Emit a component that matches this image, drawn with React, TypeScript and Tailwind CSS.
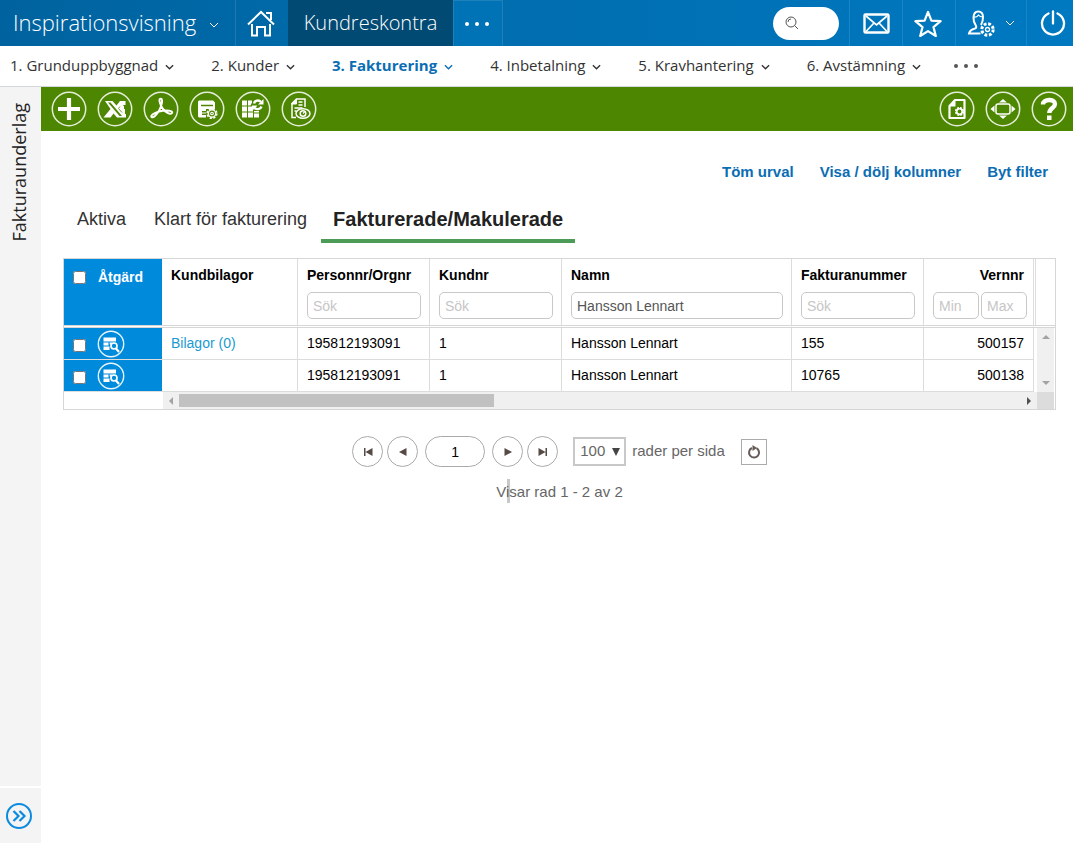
import type { ReactNode } from 'react'

interface InvoiceRow {
  attachments: string | null
  personNr: string
  customerNr: string
  name: string
  invoiceNr: string
  voucherNr: string
}

const rows: InvoiceRow[] = [
  {
    attachments: 'Bilagor (0)',
    personNr: '195812193091',
    customerNr: '1',
    name: 'Hansson Lennart',
    invoiceNr: '155',
    voucherNr: '500157',
  },
  {
    attachments: null,
    personNr: '195812193091',
    customerNr: '1',
    name: 'Hansson Lennart',
    invoiceNr: '10765',
    voucherNr: '500138',
  },
]

const steps = [
  { label: '1. Grunduppbyggnad' },
  { label: '2. Kunder' },
  { label: '3. Fakturering', active: true },
  { label: '4. Inbetalning' },
  { label: '5. Kravhantering' },
  { label: '6. Avstämning' },
]

function Chevron({ className }: { className: string }) {
  return (
    <svg viewBox="0 0 10 6" className={className} fill="none" stroke="currentColor">
      <path d="M1 1l4 4 4-4" />
    </svg>
  )
}

function HomeIcon() {
  return (
    <svg viewBox="0 0 28 27" className="h-[27px] w-7" fill="none" stroke="currentColor" strokeWidth="2">
      <path d="M1 14.5L14 2l13 12.5" />
      <path d="M19 3h5v7" />
      <path d="M5 14v11.500h5v-8.500h8v8.500h5V14" />
    </svg>
  )
}

function MailIcon() {
  return (
    <svg viewBox="0 0 27 21" className="h-[21px] w-[27px]" fill="none" stroke="currentColor" strokeWidth="2.400">
      <rect x="1.500" y="1.500" width="24" height="18" rx="1" />
      <path d="M3 3l10.500 9L24 3M3 18.500l7.500-8M24 18.500l-7.500-8" strokeWidth="1.700" />
    </svg>
  )
}

function StarIcon() {
  return (
    <svg viewBox="0 0 28 27" className="h-[27px] w-7" fill="none" stroke="currentColor" strokeWidth="2.200" strokeLinejoin="round">
      <path d="M14 2l3.400 8.600 9.200.6-7.100 5.900 2.300 8.900L14 21.100 6.200 26l2.300-8.900-7.100-5.900 9.200-.6z" />
    </svg>
  )
}

function UserIcon() {
  return (
    <svg viewBox="0 0 28 27" className="h-[27px] w-7" fill="none" stroke="currentColor" strokeWidth="2">
      <path d="M13.500 23.500H2c.5-3 2.500-4 6-5 1.500-.5 1.500-1.700.7-3.200C6.800 12.500 6.300 10 6.500 7c.3-3.500 2-5.500 4.700-5.500S16 3.500 16 7c.1 3-.5 5.500-2 8" />
      <path d="M7 7c3 .3 3.700-1 4.500-2 1 1.500 2.500 2 4.500 2" strokeWidth="1.200" />
      <circle cx="20.500" cy="19.500" r="5.700" strokeWidth="3" strokeDasharray="2.800 1.677" />
      <circle cx="20.500" cy="19.500" r="2" strokeWidth="1.300" />
    </svg>
  )
}

function PowerIcon() {
  return (
    <svg viewBox="0 0 26 26" className="h-[26px] w-[26px]" fill="none" stroke="currentColor" strokeWidth="2.300" strokeLinecap="round">
      <path d="M8.500 3.500a11 11 0 1 0 9 0" />
      <path d="M13 1.500v12" />
    </svg>
  )
}

function PlusIcon() {
  return <path d="M18 7v22M7 18h22" strokeWidth="4.200" />
}

function ExcelIcon() {
  return (
    <g stroke="none" fill="currentColor">
      <path d="M8 10h7.500l4 4.500 3.500-4.500h5.500V14h-3l1.500 1v3h1v5h1v3.500h-9l-3.500-4-3 4H6.500L13.500 18z" />
      <path d="M11 11.500h2.500L25 25h-2.500z" fill="#4d8600" />
      <path d="M23 15.500l-1.500 2 3.500 4" fill="none" stroke="#4d8600" strokeWidth=".8" />
    </g>
  )
}

function PdfIcon() {
  return (
    <path
      d="M17 8c2-1 2.500 1.500 1.600 5-1 4.500-4 9.500-7 12.300-1.700 1.600-3.800 1.300-3.200-.5.7-2 6-4.300 11.500-5 4.500-.6 9.300-.2 9.300 1.700 0 1.600-2.700 1.500-4.700.4-3.700-2-6.300-6-7.500-10C16.400 10 16 8.500 17 8z"
      strokeWidth="2"
    />
  )
}

function SaveGearIcon() {
  return (
    <>
      <path d="M10 9.500h14l2 2V18h-9v2h-4v4h4v2.500h-7l-1-1v-15z" fill="currentColor" stroke="none" />
      <path d="M12 14.500h12" stroke="#4d8600" strokeWidth="1.500" />
      <path d="M13 22h4" stroke="currentColor" strokeWidth="1" />
      <circle cx="23" cy="22.500" r="4.800" strokeWidth="1.600" strokeDasharray="2.200 1.570" />
      <circle cx="23" cy="22.500" r="3.700" fill="#4d8600" strokeWidth="1.400" />
      <circle cx="23" cy="22.500" r="1.300" strokeWidth="1.100" />
    </>
  )
}

function GridRefreshIcon() {
  return (
    <>
      <path
        d="M7 9.500h5v5H7zM13 9.500h4v2l-1.500 3H13zM7 15.500h5v5H7zM13 15.500h5v5h-5zM19 20h5v1.500h-5zM7 21.500h5v5H7zM13 21.500h5v5h-5zM19 22.500h5v4h-5z"
        fill="currentColor"
        stroke="none"
      />
      <path d="M19 12.500c.7-3.200 4.800-4 7-1.500M26.500 15.500c-1 3-4.800 3.500-7 1.300" strokeWidth="2.400" />
      <path d="M28.500 8v5.500H23zM17 20v-5.500h5.500z" fill="currentColor" stroke="none" />
    </>
  )
}

function DocumentEyeIcon() {
  return (
    <>
      <path d="M15 26.500h-4V12.500L15.500 8H24v8" strokeWidth="1.500" />
      <path d="M10.500 13L15.500 8v5z" fill="currentColor" />
      <path d="M17.500 11h4M17.500 14h4M13.500 17h8M13.500 20h2" strokeWidth="1.300" />
      <ellipse cx="22" cy="22.500" rx="7" ry="4.700" strokeWidth="1.500" />
      <circle cx="22" cy="22.500" r="2.800" strokeWidth="1.500" />
      <path d="M22 22.500l1.500-1.500" strokeWidth="1.200" />
    </>
  )
}

function DocumentGearIcon() {
  return (
    <>
      <path d="M10.500 27V15l5.500-6h9.500v18z" strokeWidth="2.200" strokeLinejoin="round" />
      <path d="M10 15.500L16.500 8.500v7z" fill="currentColor" stroke="none" />
      <circle cx="20.500" cy="20.500" r="3.700" strokeWidth="1.800" strokeDasharray="2 .905" />
      <circle cx="20.500" cy="20.500" r="2.700" strokeWidth="1.500" />
    </>
  )
}

function ExpandIcon() {
  return (
    <>
      <rect x="11" y="13" width="14" height="10" rx="2" strokeWidth="1.500" />
      <path d="M14 11.500L18 8l4 3.500zM14 24.500L18 28l4-3.500zM9.500 14.500L5.500 18l4 3.500zM26.500 14.500l4 3.500-4 3.500z" fill="currentColor" stroke="none" />
    </>
  )
}

function HelpIcon() {
  return (
    <>
      <path d="M12 13.500c0-6 12-6 12-.5 0 4-5.700 4-5.700 9" strokeWidth="4.400" />
      <path d="M16 24.500h4.500V29H16z" fill="currentColor" stroke="none" />
    </>
  )
}

function ToolButton({ label, children }: { label: string; children: ReactNode }) {
  return (
    <button type="button" aria-label={label} className="h-9 w-9 text-white">
      <svg viewBox="0 0 36 36" className="h-9 w-9" fill="none" stroke="currentColor">
        <circle cx="18" cy="18" r="16.700" strokeWidth="1.500" strokeOpacity=".85" />
        {children}
      </svg>
    </button>
  )
}

function HeaderButton({ label, className, children }: { label: string; className: string; children: ReactNode }) {
  return (
    <button
      type="button"
      aria-label={label}
      className={`flex shrink-0 items-center justify-center border-l border-[#1a86c8] ${className}`}
    >
      {children}
    </button>
  )
}

function TopBar() {
  return (
    <header className="flex h-[46px] items-stretch bg-linear-to-r from-[#00639f] to-[#0079c1] font-['Open_Sans',sans-serif] text-white">
      <button type="button" className="flex w-[235px] shrink-0 items-center pb-[2px] pl-[13px] text-[22px] font-light">
        Inspirationsvisning
        <Chevron className="mt-[6px] ml-[13px] h-[6px] w-[10px]" />
      </button>
      <button type="button" aria-label="Hem" className="flex w-[53px] shrink-0 items-center justify-center border-l border-[#1f78b0] pr-[2px]">
        <HomeIcon />
      </button>
      <button type="button" className="w-[165px] shrink-0 bg-[#004a73] text-xl font-light">
        Kundreskontra
      </button>
      <button
        type="button"
        aria-label="Fler moduler"
        className="flex w-[50px] shrink-0 items-center justify-center gap-[6px] border-x border-t border-[#1f80bb] bg-[#0073b7] pr-[3px]"
      >
        <span className="h-1 w-1 rounded-full bg-white" />
        <span className="h-1 w-1 rounded-full bg-white" />
        <span className="h-1 w-1 rounded-full bg-white" />
      </button>

      <div className="ml-auto flex items-stretch">
        <label className="mr-[10px] flex h-[33px] w-[66px] items-center self-center rounded-full bg-white pl-3 text-[#555]">
          <svg viewBox="0 0 14 14" className="h-[14px] w-[14px] shrink-0" fill="none" stroke="currentColor">
            <circle cx="6" cy="6" r="5" />
            <path d="M3 6a3 3 0 0 1 3-3M9.500 9.500l3.500 3.500" />
          </svg>
          <input type="text" aria-label="Sök" className="w-9 bg-transparent text-sm outline-none" />
        </label>
        <HeaderButton label="Meddelanden" className="w-[53px]">
          <MailIcon />
        </HeaderButton>
        <HeaderButton label="Favoriter" className="w-[53px] pr-[2px]">
          <StarIcon />
        </HeaderButton>
        <HeaderButton label="Användare" className="w-[71px] gap-[10px]">
          <UserIcon />
          <Chevron className="h-[6px] w-[10px]" />
        </HeaderButton>
        <HeaderButton label="Logga ut" className="w-[47px] pl-[6px]">
          <PowerIcon />
        </HeaderButton>
      </div>
    </header>
  )
}

function StepNav() {
  return (
    <nav className="flex h-[41px] items-center gap-[37px] border-b border-[#d4d8dc] pb-[2px] pl-[10px] font-['Open_Sans',sans-serif] text-[15px] whitespace-nowrap text-[#333]">
      {steps.map((step) => (
        <a
          key={step.label}
          href="#"
          className={step.active ? 'flex items-center gap-[7px] font-bold text-[#0b6db3]' : 'flex items-center gap-[7px]'}
        >
          {step.label}
          <Chevron className="mt-[3px] h-[6px] w-[9px] stroke-[1.5]" />
        </a>
      ))}
      <button type="button" aria-label="Fler steg" className="-ml-1 flex gap-[6px] pt-[2px]">
        <span className="h-1 w-1 rounded-full bg-[#555]" />
        <span className="h-1 w-1 rounded-full bg-[#555]" />
        <span className="h-1 w-1 rounded-full bg-[#555]" />
      </button>
    </nav>
  )
}

function Sidebar() {
  return (
    <aside className="flex w-[41px] shrink-0 flex-col bg-[#f4f4f4]">
      <h1 className="mt-[16px] ml-[7px] rotate-180 self-start font-['Open_Sans',sans-serif] text-lg leading-6 font-medium text-[#222] [writing-mode:vertical-rl]">
        Fakturaunderlag
      </h1>
      <div className="mt-auto h-[57px] border-t-2 border-white pt-[14px] pl-[5px]">
        <button type="button" aria-label="Visa meny" className="block text-[#0a8ae0]">
          <svg viewBox="0 0 28 28" className="h-7 w-7" fill="none" stroke="currentColor" strokeWidth="2">
            <circle cx="14" cy="14" r="12" />
            <path d="M8.500 9l5 5-5 5M14.500 9l5 5-5 5" strokeWidth="2.200" />
          </svg>
        </button>
      </div>
    </aside>
  )
}

function Toolbar() {
  return (
    <div className="flex h-11 items-center justify-between bg-[#4d8600] pr-[6px] pl-[10px]">
      <div className="flex gap-[10px]">
        <ToolButton label="Ny"><PlusIcon /></ToolButton>
        <ToolButton label="Exportera till Excel"><ExcelIcon /></ToolButton>
        <ToolButton label="Exportera till PDF"><PdfIcon /></ToolButton>
        <ToolButton label="Spara inställningar"><SaveGearIcon /></ToolButton>
        <ToolButton label="Uppdatera"><GridRefreshIcon /></ToolButton>
        <ToolButton label="Förhandsgranska"><DocumentEyeIcon /></ToolButton>
      </div>
      <div className="flex gap-[10px]">
        <ToolButton label="Sidinställningar"><DocumentGearIcon /></ToolButton>
        <ToolButton label="Helskärm"><ExpandIcon /></ToolButton>
        <ToolButton label="Hjälp"><HelpIcon /></ToolButton>
      </div>
    </div>
  )
}

function FilterInput({ label, placeholder, value }: { label: string; placeholder?: string; value?: string }) {
  return (
    <input
      type="text"
      aria-label={label}
      placeholder={placeholder}
      defaultValue={value}
      className="block h-[27px] w-full min-w-0 rounded-[5px] border border-[#c8c8c8] px-[5px] font-normal text-[#555] placeholder:text-[#c6c6c6]"
    />
  )
}

function ColumnHeader({ label, placeholder = 'Sök', value }: { label: string; placeholder?: string; value?: string }) {
  return (
    <th className="border-r border-b-[3px] border-r-[#dcdcdc] border-b-[#d6d6d6] px-2 pt-2 pl-[9px] text-left align-top [border-bottom-style:double]">
      <div className="mb-[9px] leading-4">{label}</div>
      <FilterInput label={label} placeholder={placeholder} value={value} />
    </th>
  )
}

function InvoiceTable() {
  const cell = 'border-r border-b border-[#dcdcdc] px-[9px] pb-[2px]'

  return (
    <div className="border border-[#d6d6d6]">
      <table className="w-full table-fixed border-separate border-spacing-0 text-sm text-black">
        <colgroup>
          <col className="w-[98px]" />
          <col className="w-[136px]" />
          <col className="w-[132px]" />
          <col className="w-[132px]" />
          <col />
          <col className="w-[132px]" />
          <col className="w-[110px]" />
          <col className="w-[21px]" />
        </colgroup>
        <thead>
          <tr className="h-[69px]">
            <th className="border-b-[3px] border-[#d6d6d6] bg-[#008adb] bg-clip-padding pt-[9px] pl-[9px] align-top text-white [border-bottom-style:double]">
              <div className="flex items-center gap-3 leading-[18px]">
                <input type="checkbox" aria-label="Markera alla" className="m-0 h-[13px] w-[13px]" />
                Åtgärd
              </div>
            </th>
            <th className="border-r border-b-[3px] border-r-[#dcdcdc] border-b-[#d6d6d6] pt-2 pl-[9px] text-left align-top leading-4 [border-bottom-style:double]">
              Kundbilagor
            </th>
            <ColumnHeader label="Personnr/Orgnr" />
            <ColumnHeader label="Kundnr" />
            <ColumnHeader label="Namn" value="Hansson Lennart" />
            <ColumnHeader label="Fakturanummer" />
            <th className="border-r border-b-[3px] border-r-[#dcdcdc] border-b-[#d6d6d6] pt-2 pr-[6px] pl-[9px] align-top [border-bottom-style:double]">
              <div className="mb-[9px] pr-[3px] text-right leading-4">Vernnr</div>
              <div className="flex gap-[2px]">
                <FilterInput label="Vernnr min" placeholder="Min" />
                <FilterInput label="Vernnr max" placeholder="Max" />
              </div>
            </th>
            <td className="border-b-[3px] border-[#d6d6d6] p-0 pl-[1px] [border-bottom-style:double]">
              <div className="h-[66px] border-l border-[#dcdcdc]" />
            </td>
          </tr>
        </thead>
        <tbody>
          {rows.map((row, index) => (
            <tr key={row.invoiceNr} className="h-8">
              <td className="border-b border-[#dcdcdc] bg-[#008adb] bg-clip-padding p-0 pl-[9px]">
                <div className="flex items-center gap-[11px]">
                  <input type="checkbox" aria-label={`Markera faktura ${row.invoiceNr}`} className="mx-0 mt-[3px] mb-0 h-[13px] w-[13px]" />
                  <button type="button" aria-label="Visa detaljer" className="text-white">
                    <svg viewBox="0 0 28 28" className="block h-7 w-7" fill="none" stroke="currentColor">
                      <circle cx="14" cy="14" r="12.700" strokeWidth="1.400" strokeOpacity=".9" />
                      <path d="M6.500 7.500h12.500v4H6.500zM6.500 12.500h5v3h-5zM6.500 16.500h6v3.500h-6zM12.500 12.500h3l-2.500 2.500z" fill="currentColor" stroke="none" />
                      <circle cx="17" cy="16" r="3" strokeWidth="1.700" />
                      <path d="M19 18.500l3 3.500" strokeWidth="2.200" />
                    </svg>
                  </button>
                </div>
              </td>
              <td className={cell}>
                {row.attachments && <a href="#" className="text-[#1a9ad0]">{row.attachments}</a>}
              </td>
              <td className={cell}>{row.personNr}</td>
              <td className={cell}>{row.customerNr}</td>
              <td className={cell}>{row.name}</td>
              <td className={cell}>{row.invoiceNr}</td>
              <td className={`${cell} text-right`}>{row.voucherNr}</td>
              {index === 0 && (
                <td rowSpan={rows.length} className="p-0 pr-[1px] pl-[3px]">
                  <div className="flex h-16 flex-col items-center justify-between bg-[#f0f0f0] py-[7px] text-[#a3a3a3]">
                    <svg viewBox="0 0 8 4" className="h-1 w-2" fill="currentColor"><path d="M0 4l4-4 4 4z" /></svg>
                    <svg viewBox="0 0 8 4" className="h-1 w-2" fill="currentColor"><path d="M0 0l4 4 4-4z" /></svg>
                  </div>
                </td>
              )}
            </tr>
          ))}
        </tbody>
      </table>
      {/* horizontal scroll track */}
      <div className="flex h-[17px] pr-[1px] pl-[99px]">
        <div className="flex flex-1 items-center bg-[#f0f0f0]">
          <svg viewBox="0 0 4 8" className="mx-[6px] h-2 w-1 text-[#a3a3a3]" fill="currentColor"><path d="M4 0L0 4l4 4z" /></svg>
          <div className="h-[13px] w-[36%] bg-[#c1c1c1]" />
          <svg viewBox="0 0 4 8" className="mr-[6px] ml-auto h-2 w-1 text-[#505050]" fill="currentColor"><path d="M0 0l4 4-4 4z" /></svg>
        </div>
        <div className="w-[17px] bg-[#dcdcdc]" />
      </div>
    </div>
  )
}

function PagerButton({ label, path }: { label: string; path: string }) {
  return (
    <button
      type="button"
      aria-label={label}
      className="flex h-[31px] w-[31px] items-center justify-center rounded-full border border-[#aaa] text-[#554a46]"
    >
      <svg viewBox="0 0 10 8" className="h-2 w-[10px]" fill="currentColor"><path d={path} /></svg>
    </button>
  )
}

function Pager() {
  return (
    <div className="mt-[26px] text-[15px] text-[#666]">
      <div className="flex items-center justify-center">
        <div className="flex gap-1">
          <PagerButton label="Första sidan" path="M1 0h1.500v8H1zM9.500 0v8L2.500 4z" />
          <PagerButton label="Föregående sida" path="M8.500 0v8L1 4z" />
        </div>
        <input
          type="text"
          aria-label="Sida"
          defaultValue="1"
          className="mx-[7px] h-[31px] w-[60px] rounded-full border border-[#aaa] text-center text-sm text-black"
        />
        <div className="flex gap-1">
          <PagerButton label="Nästa sida" path="M1.500 0v8L9 4z" />
          <PagerButton label="Sista sidan" path="M7.500 0H9v8H7.500zM.5 0v8l7-4z" />
        </div>
        <div className="relative ml-[15px]">
          <select
            id="page-size"
            defaultValue="100"
            className="block h-[29px] w-[53px] appearance-none border-2 border-[#c8c8c8] bg-white pl-[5px]"
          >
            <option>50</option>
            <option>100</option>
            <option>200</option>
          </select>
          <svg viewBox="0 0 8 8" className="pointer-events-none absolute top-[11px] right-[6px] h-2 w-2" fill="#444"><path d="M0 0h8L4 8z" /></svg>
        </div>
        <label htmlFor="page-size" className="ml-[6px]">rader per sida</label>
        <button type="button" aria-label="Ladda om" className="ml-4 flex h-[26px] w-[26px] items-center justify-center border border-[#aaa] text-[#665b57]">
          <svg viewBox="0 0 14 14" className="h-[14px] w-[14px]" fill="none" stroke="currentColor" strokeWidth="2">
            <path d="M9.500 3.200A5 5 0 1 1 5 3" />
            <path d="M5.500 0v6L10 3z" fill="currentColor" stroke="none" />
          </svg>
        </button>
      </div>
      <p className="mt-[15px] text-center leading-5">
        <span className="relative">
          <span className="absolute -top-1 left-[11px] h-6 w-[3px] bg-[#c8c8c8]" />
          <span className="relative">Visar rad 1 - 2 av 2</span>
        </span>
      </p>
    </div>
  )
}

export default function App() {
  return (
    <div className="flex min-h-screen flex-col bg-white font-['Liberation_Sans',Arial,sans-serif]">
      <TopBar />
      <StepNav />
      <div className="flex flex-1">
        <Sidebar />
        <main className="min-w-0 flex-1">
          <Toolbar />
          <div className="pr-[17px] pl-[22px]">
            <div className="flex justify-end gap-[26px] pt-[31px] pr-2 text-[15px] leading-5 font-bold text-[#0b6db3]">
              <a href="#">Töm urval</a>
              <a href="#">Visa / dölj kolumner</a>
              <a href="#">Byt filter</a>
            </div>
            <div role="tablist" className="mt-[18px] mb-[15px] flex h-[43px] items-stretch text-lg text-[#333]">
              <button type="button" role="tab" className="px-[14px] pb-[6px]">Aktiva</button>
              <button type="button" role="tab" className="px-[14px] pb-[6px]">Klart för fakturering</button>
              <button
                type="button"
                role="tab"
                aria-selected="true"
                className="border-b-4 border-[#4c9b57] px-3 pb-[2px] text-xl font-bold text-[#222]"
              >
                Fakturerade/Makulerade
              </button>
            </div>
            <InvoiceTable />
            <Pager />
          </div>
        </main>
      </div>
    </div>
  )
}
